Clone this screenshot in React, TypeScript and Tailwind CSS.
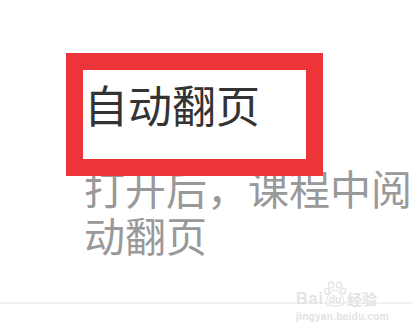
export default function App() {
  return (
    <div className="relative h-[335px] w-[413px] overflow-hidden bg-white font-['Noto_Sans_CJK_SC',sans-serif]">
      <div className="flex flex-col pl-[84px] pt-[82px]">
        <h1 className="text-[44px] leading-[44px] font-normal text-[#333333]">
          自动翻页
        </h1>
        <div className="mt-[38px] flex flex-col text-[41px] leading-[47px] text-[#999999]">
          <span className="whitespace-nowrap">打开后，课程中阅</span>
          <span>动翻页</span>
        </div>
      </div>
      <div className="mt-[44px] h-[2px] w-full bg-[#f2f2f2]" />

      {/* annotation box */}
      <div className="absolute left-[66px] top-[53px] h-[123px] w-[257px] border-[17px] border-[#ed3438]" />

      {/* watermark */}
      <div className="absolute left-[296px] top-[281px] flex flex-col items-start font-['Liberation_Sans',sans-serif] text-[#e3e3e3]">
        <div className="flex items-end">
          <span className="text-[16px] leading-[16px] font-bold tracking-[1px]">Bai</span>
          <span className="relative flex h-[26px] w-[22px] items-end justify-center">
            <svg className="absolute left-0 top-0" width="22" height="26" viewBox="0 0 22 26" fill="none" stroke="#e3e3e3" strokeWidth="1.2">
              <ellipse cx="7" cy="4" rx="2.6" ry="3.2" />
              <ellipse cx="15" cy="4" rx="2.6" ry="3.2" />
              <ellipse cx="2.8" cy="10" rx="2.3" ry="2.8" />
              <ellipse cx="19.2" cy="10" rx="2.3" ry="2.8" />
              <path d="M11 9c-4 0-9 8-9 12 0 3 3 4 9 4s9-1 9-4c0-4-5-12-9-12z" />
            </svg>
            <span className="relative mb-[2px] text-[10px] leading-[10px] font-bold">du</span>
          </span>
          <span className="ml-[1px] font-['Noto_Sans_CJK_SC',sans-serif] text-[15px] leading-[16px] font-bold">经验</span>
        </div>
        <span className="mt-[5px] text-[10px] leading-[10px] font-bold tracking-[0.3px]">jingyan.baidu.com</span>
      </div>
    </div>
  );
}
